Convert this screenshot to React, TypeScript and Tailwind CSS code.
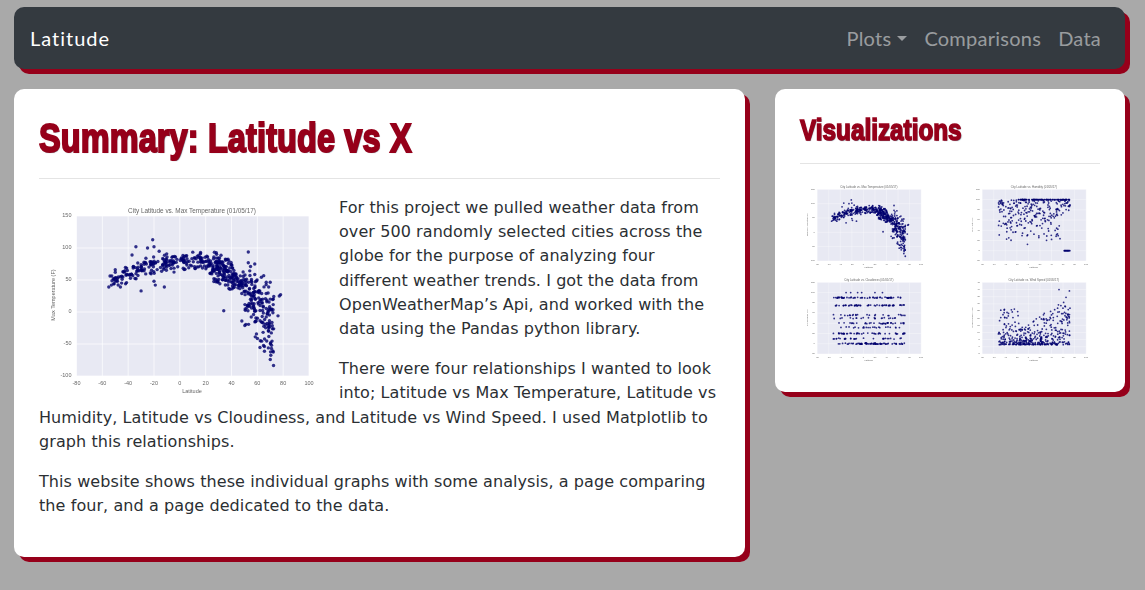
import { useMemo } from "react";

type Point = [number, number];

// small seeded generator so the plots stay the same between renders
const makeRandom = (seed: number) => () => {
  seed = (seed + 0x6d2b79f5) | 0;
  let t = Math.imul(seed ^ (seed >>> 15), 1 | seed);
  t = (t + Math.imul(t ^ (t >>> 7), 61 | t)) ^ t;
  return ((t ^ (t >>> 14)) >>> 0) / 4294967296;
};

const latitudeOf = (r: () => number) => {
  const v = r();
  if (v < 0.25) return -55 + r() * 55;
  if (v < 0.45) return r() * 30;
  return 28 + r() * 45;
};

const tempPoints = (): Point[] => {
  const r = makeRandom(17);
  const pts: Point[] = [
    [-21, 113], [-34, 102], [-25, 100], [-20, 102], [-37, 89], [-16, 95], [53, 77], [58, 75],
    [-30, 33], [-12, 39], [72, -61], [78, 27], [77, 25], [76, -6], [71, -52], [-20, 48], [-19, 42],
    [-55, 39], [-53, 42], [-51, 44], [-46, 55], [-45, 56], [-46, 39], [-42, 44], [34, 2], [48, -14],
  ];
  for (let i = 0; i < 560; i++) {
    const lat = latitudeOf(r);
    const base =
      lat < 0
        ? 78 - (lat * lat) / 90
        : lat < 20
          ? 80 - lat * 0.1
          : 78 - (lat - 20) * 1.2 - Math.max(0, lat - 50) * 1.6;
    const spread = lat < 25 ? 18 : lat < 50 ? 28 : 70;
    pts.push([lat, base + (r() + r() - 1) * spread]);
  }
  return pts;
};

const humidityPoints = (): Point[] => {
  const r = makeRandom(51);
  const pts: Point[] = [];
  for (let i = 0; i < 90; i++) pts.push([-18 + r() * 90, 100]);
  for (let i = 0; i < 12; i++) pts.push([62 + r() * 10, 0]);
  for (let i = 0; i < 260; i++) {
    const lat = -52 + r() * 124;
    const v = Math.sqrt(r());
    pts.push([lat, 100 - (1 - v) * 88 * (lat > 55 ? 0.35 : 1)]);
  }
  return pts;
};

const cloudPoints = (): Point[] => {
  const r = makeRandom(83);
  const pts: Point[] = [];
  const bands = [0, 0, 0, 0, 10, 20, 20, 32, 40, 40, 50, 56, 75, 75, 75, 90, 90, 90];
  for (let i = 0; i < 360; i++) {
    const y = bands[Math.floor(r() * bands.length)];
    const lat = y === 0 ? -45 + r() * 117 : -52 + r() * 124;
    pts.push([lat, y + (r() - 0.5) * 2]);
  }
  [-30, -22, -10, -3, 20, 33].forEach((x) => pts.push([x, 100]));
  return pts;
};

const windPoints = (): Point[] => {
  const r = makeRandom(29);
  const pts: Point[] = [
    [53, 40], [71, 39], [69, 26], [72, 27], [-37, 24], [61, 31], [64, 28],
  ];
  for (let i = 0; i < 420; i++) {
    const lat = -52 + r() * 124;
    const ceiling = lat < -15 ? 25 : 14 + Math.max(0, lat) * 0.3;
    pts.push([lat, 1.5 + Math.pow(r(), 2.2) * ceiling]);
  }
  return pts;
};

type PlotProps = {
  title: string;
  yLabel: string;
  yTicks: number[];
  points: () => Point[];
  className: string;
  radius: number;
};

const xTicks = [-80, -60, -40, -20, 0, 20, 40, 60, 80, 100];
const left = 37.5;
const right = 270;
const top = 21;
const bottom = 181;

const ScatterPlot = ({ title, yLabel, yTicks, points, className, radius }: PlotProps) => {
  const data = useMemo(points, [points]);
  const yMin = yTicks[0];
  const yMax = yTicks[yTicks.length - 1];
  const px = (v: number) => left + ((v + 80) / 180) * (right - left);
  const py = (v: number) => bottom - ((v - yMin) / (yMax - yMin)) * (bottom - top);

  return (
    <svg viewBox="0 0 300 208" fontFamily="Liberation Sans, sans-serif" className={className}>
      <rect x={left} y={top} width={right - left} height={bottom - top} fill="#e8e9f3" />
      {xTicks.map((t) => (
        <g key={t}>
          <line x1={px(t)} x2={px(t)} y1={top} y2={bottom} stroke="#fff" strokeWidth="0.7" />
          <text x={px(t)} y={190} fontSize="5.5" textAnchor="middle" fill="#666">
            {t}
          </text>
        </g>
      ))}
      {yTicks.map((t) => (
        <g key={t}>
          <line x1={left} x2={right} y1={py(t)} y2={py(t)} stroke="#fff" strokeWidth="0.7" />
          <text x={left - 5} y={py(t) + 1} fontSize="5.5" textAnchor="end" fill="#666">
            {t}
          </text>
        </g>
      ))}
      <text x={153} y={17.5} fontSize="6.4" textAnchor="middle" fill="#666">
        {title}
      </text>
      <text x={153} y={197.5} fontSize="5.5" textAnchor="middle" fill="#666">
        Latitude
      </text>
      <text
        x={16}
        y={100}
        fontSize="5.5"
        textAnchor="middle"
        fill="#666"
        transform="rotate(-90 16 100)"
      >
        {yLabel}
      </text>
      {data.map(([x, y], i) => (
        <circle key={i} cx={px(x)} cy={py(y)} r={radius} fill="#00006e" fillOpacity="0.8" />
      ))}
    </svg>
  );
};

const tempTicks = [-100, -50, 0, 50, 100, 150];
const humidityTicks = [-20, 0, 20, 40, 60, 80, 100, 120];
const cloudTicks = [-20, 0, 20, 40, 60, 80, 100, 120];
const windTicks = [-5, 0, 5, 10, 15, 20, 25, 30, 35, 40, 45];

const headingFace =
  "origin-left scale-x-[0.81] whitespace-nowrap font-['Liberation_Sans',sans-serif] font-bold text-[#96001a] [text-shadow:1px_1px_1px_#6b7280]";

export default function App() {
  return (
    <div className="min-h-[590px] bg-[#a9a9a9] pt-[7px] pr-[20px] pl-[14px] font-['DejaVu_Sans','Liberation_Sans',sans-serif] text-[#212529]">
      <nav className="flex h-[62px] items-center justify-between rounded-[10px] bg-[#343a40] pr-[24px] pl-4 font-['Lato',sans-serif] shadow-[5px_5px_0_#96001a]">
        <a className="text-[20px] tracking-[1px] text-white">Latitude</a>
        <div className="flex items-center gap-[17px] text-[20px] tracking-[0.25px] text-white/50">
          <a className="flex items-center">
            Plots
            <span className="ml-[6px] h-0 w-0 border-x-[5px] border-t-[5px] border-x-transparent border-t-white/50" />
          </a>
          <a>Comparisons</a>
          <a>Data</a>
        </div>
      </nav>

      <div className="mt-5 flex items-start gap-[30px]">
        <main className="h-[468px] w-[731px] shrink-0 rounded-[10px] bg-white p-[25px] shadow-[5px_5px_0_#96001a]">
          <h1
            className={`h-[48px] text-[40px] leading-[48px] tracking-[0.2px] [-webkit-text-stroke:2px_#96001a] ${headingFace}`}
          >
            Summary: Latitude vs X
          </h1>
          <hr className="mt-4 mb-4 border-[#e4e4e4]" />
          <ScatterPlot
            className="float-left h-[208px] w-[300px] blur-[0.5px]"
            title="City Latitude vs. Max Temperature (01/05/17)"
            yLabel="Max Temperature (F)"
            yTicks={tempTicks}
            points={tempPoints}
            radius={1.7}
          />
          <div className="pt-px text-[16px] leading-[24.2px] tracking-[0.08px] text-[#2b2f33]">
            <p className="mb-4">
              For this project we pulled weather data from over 500 randomly selected cities across
              the globe for the purpose of analyzing four different weather trends. I got the data
              from OpenWeatherMap’s Api, and worked with the data using the Pandas python library.
            </p>
            <p className="mb-4">
              There were four relationships I wanted to look into; Latitude vs Max Temperature,
              Latitude vs Humidity, Latitude vs Cloudiness, and Latitude vs Wind Speed. I used
              Matplotlib to graph this relationships.
            </p>
            <p>
              This website shows these individual graphs with some analysis, a page comparing the
              four, and a page dedicated to the data.
            </p>
          </div>
        </main>

        <aside className="h-[303px] w-[350px] shrink-0 rounded-[10px] bg-white p-[25px] shadow-[5px_5px_0_#96001a]">
          <h2
            className={`h-[32px] text-[30px] leading-[32px] [-webkit-text-stroke:1.6px_#96001a] ${headingFace}`}
          >
            Visualizations
          </h2>
          <hr className="mt-[17px] mb-4 border-[#e4e4e4]" />
          <div className="grid grid-cols-[135px_135px] justify-between">
            <ScatterPlot
              className="h-[93px] w-[135px] blur-[0.6px]"
              title="City Latitude vs. Max Temperature (01/05/17)"
              yLabel="Max Temperature (F)"
              yTicks={tempTicks}
              points={tempPoints}
              radius={2}
            />
            <ScatterPlot
              className="h-[93px] w-[135px] blur-[0.6px]"
              title="City Latitude vs. Humidity (01/05/17)"
              yLabel="Humidity (%)"
              yTicks={humidityTicks}
              points={humidityPoints}
              radius={2}
            />
            <ScatterPlot
              className="h-[93px] w-[135px] blur-[0.6px]"
              title="City Latitude vs. Cloudiness (01/05/17)"
              yLabel="Cloudiness (%)"
              yTicks={cloudTicks}
              points={cloudPoints}
              radius={2}
            />
            <ScatterPlot
              className="h-[93px] w-[135px] blur-[0.6px]"
              title="City Latitude vs. Wind Speed (01/05/17)"
              yLabel="Wind Speed (mph)"
              yTicks={windTicks}
              points={windPoints}
              radius={2}
            />
          </div>
        </aside>
      </div>
    </div>
  );
}
